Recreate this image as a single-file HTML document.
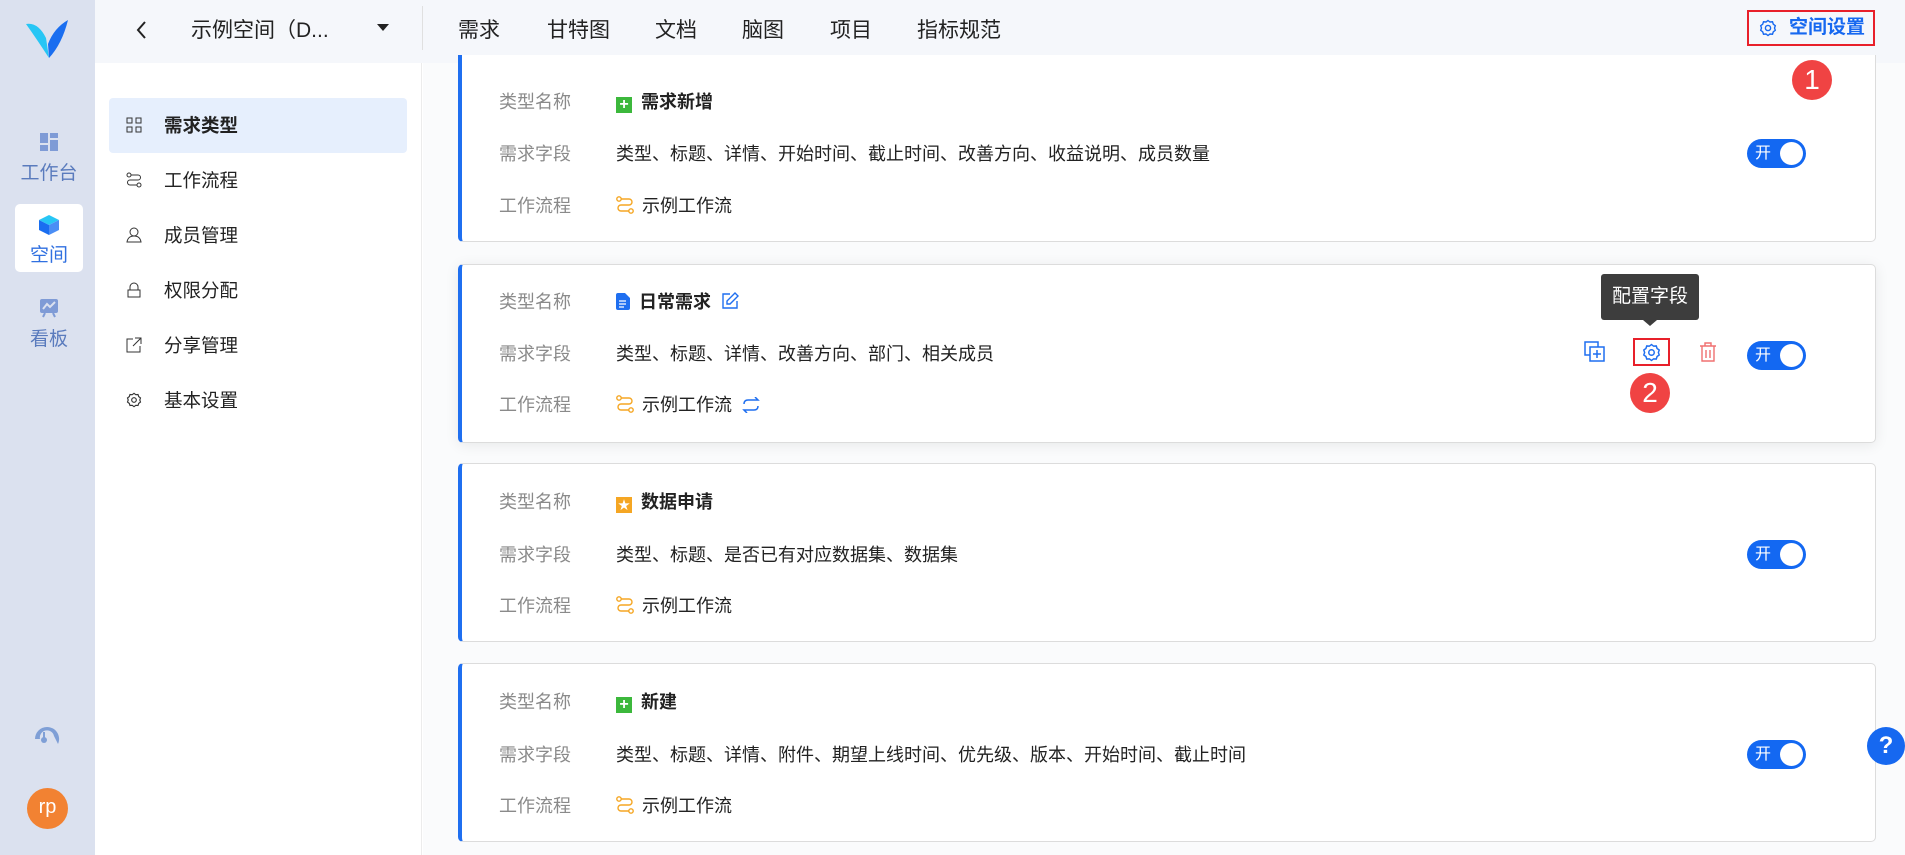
<!DOCTYPE html>
<html><head><meta charset="utf-8"><style>
*{box-sizing:border-box;margin:0;padding:0}
body{width:1905px;height:855px;overflow:hidden;position:relative;background:#fff;font-family:"Liberation Sans","Noto Sans CJK SC",sans-serif;color:#222}
.abs{position:absolute}
#side{left:0;top:0;width:95px;height:855px;background:#dbe1ef}
.sitem{position:absolute;left:15px;width:68px;text-align:center;color:#5a7bbd;font-size:19px}
#top{left:95px;top:0;width:1810px;height:63px;background:#f5f7fb}
.nav{position:absolute;top:14px;font-size:21px;color:#222}
#lnav{left:95px;top:63px;width:327px;height:792px;background:#fff;border-right:1px solid #ececec}
.li{position:absolute;left:14px;width:298px;height:55px;font-size:18.5px;line-height:55px;padding-left:55px;color:#222;border-radius:4px}
.li svg{position:absolute;left:17px;top:19px}
#main{left:423px;top:63px;width:1482px;height:792px;background:#fafbfc}
.card{position:absolute;left:35px;width:1418px;height:179px;background:#fff;border:1px solid #dcdcdc;border-left:4px solid #1f6ff0;border-radius:5px}
.lab{position:absolute;left:37px;font-size:18px;color:#8a8a8a}
.val{position:absolute;left:154px;font-size:18px;color:#222}
.nm{font-weight:bold}
.tog{position:absolute;left:1285px;top:76px;width:59px;height:29px;background:#1368f2;border-radius:15px;color:#fff;font-size:16px;line-height:29px;padding-left:8px}
.tog:after{content:"";position:absolute;right:3px;top:3px;width:23px;height:23px;border-radius:50%;background:#fff}
.badge{position:absolute;width:40px;height:40px;border-radius:50%;background:#f04343;color:#fff;font-size:28px;text-align:center;line-height:40px;z-index:5}
</style></head><body>
<div id="side" class="abs">
 <svg class="abs" style="left:24px;top:18px" width="46" height="44" viewBox="0 0 46 44"><path d="M2 6 Q14 4 22 20 L25 40 Q12 20 2 6Z" fill="#27c6f5"/><path d="M44 2 Q30 10 24 26 L25 40 Q38 26 44 2Z" fill="#1a6ef0"/></svg>
 <div class="sitem" style="top:132px"><svg width="20" height="20"><rect x="1" y="1" width="8" height="10" fill="#7f9bd6"/><rect x="11" y="1" width="8" height="5" fill="#7f9bd6"/><rect x="1" y="13" width="8" height="6" fill="#7f9bd6"/><rect x="11" y="8" width="8" height="11" fill="#7f9bd6"/></svg><div>工作台</div></div>
 <div class="sitem" style="top:204px;height:68px;background:#fff;border-radius:5px;padding-top:10px"><svg width="22" height="22" viewBox="0 0 22 22"><path d="M11 1 L21 6 L11 11 L1 6Z" fill="#27c6f5"/><path d="M1 6 L11 11 L11 21 L1 16Z" fill="#1a6ef0"/><path d="M21 6 L11 11 L11 21 L21 16Z" fill="#4a8ef5"/></svg><div style="color:#3070e0;margin-top:-2px">空间</div></div>
 <div class="sitem" style="top:296px"><svg width="22" height="22"><rect x="2" y="3" width="18" height="14" rx="2" fill="#7f9bd6"/><path d="M5 13 L9 8 L12 11 L17 6" stroke="#dbe1ef" stroke-width="2" fill="none"/><path d="M7 17 L5 21 M15 17 L17 21" stroke="#7f9bd6" stroke-width="2"/></svg><div>看板</div></div>
 <svg class="abs" style="left:34px;top:726px" width="26" height="24" viewBox="0 0 26 24"><path d="M13 1 A12 12 0 0 0 1 13 L6 13 A7 7 0 0 1 20 10 L24 18 A12 12 0 0 0 13 1Z" fill="#7f9fd6"/><circle cx="10" cy="14" r="3" fill="#7f9fd6"/><path d="M10 14 L10 6" stroke="#7f9fd6" stroke-width="2"/></svg>
 <div class="abs" style="left:27px;top:788px;width:41px;height:41px;border-radius:50%;background:#f28232;color:#fff;font-size:20px;text-align:center;line-height:39px">rp</div>
</div>
<div id="top" class="abs">
 <svg class="abs" style="left:40px;top:20px" width="12" height="20"><path d="M10 2 L3 10 L10 18" fill="none" stroke="#222" stroke-width="2"/></svg>
 <div class="nav" style="left:96px">示例空间（D...</div>
 <div class="abs" style="left:282px;top:24px;border:6px solid transparent;border-top:7px solid #222"></div>
 <div class="abs" style="left:327px;top:6px;width:1px;height:44px;background:#e0e0e0"></div>
 <div class="nav" style="left:363px">需求</div>
 <div class="nav" style="left:452px">甘特图</div>
 <div class="nav" style="left:560px">文档</div>
 <div class="nav" style="left:647px">脑图</div>
 <div class="nav" style="left:735px">项目</div>
 <div class="nav" style="left:822px">指标规范</div>
 <div class="abs" style="left:1652px;top:10px;width:128px;height:36px;border:2px solid #e8202a;color:#1668f0;font-size:19px;font-weight:bold;line-height:32px;padding-left:40px">空间设置
  <svg class="abs" style="left:10px;top:7px" width="18" height="18" viewBox="0 0 18 18"><path d="M9 1.5 L11 3 L13.5 2.8 L14.3 5.2 L16.3 6.7 L15.5 9 L16.3 11.3 L14.3 12.8 L13.5 15.2 L11 15 L9 16.5 L7 15 L4.5 15.2 L3.7 12.8 L1.7 11.3 L2.5 9 L1.7 6.7 L3.7 5.2 L4.5 2.8 L7 3Z" fill="none" stroke="#1668f0" stroke-width="1.4"/><circle cx="9" cy="9" r="2.6" fill="none" stroke="#1668f0" stroke-width="1.4"/></svg></div>
</div>
<div id="lnav" class="abs">
 <div class="li" style="top:35px;background:#e6effd;font-weight:bold"><svg width="16" height="16"><rect x="1" y="1" width="5" height="5" fill="none" stroke="#333"/><rect x="10" y="1" width="5" height="5" fill="none" stroke="#333"/><rect x="1" y="10" width="5" height="5" fill="none" stroke="#333"/><rect x="10" y="10" width="5" height="5" fill="none" stroke="#333"/></svg>需求类型</div>
 <div class="li" style="top:90px"><svg width="16" height="16"><circle cx="3" cy="3" r="2" fill="none" stroke="#333"/><circle cx="13" cy="13" r="2" fill="none" stroke="#333"/><path d="M5 3H12A2.5 2.5 0 0 1 12 8H4A2.5 2.5 0 0 0 4 13H11" fill="none" stroke="#333"/></svg>工作流程</div>
 <div class="li" style="top:145px"><svg width="16" height="16"><circle cx="8" cy="5" r="4" fill="none" stroke="#333"/><path d="M1 15 Q2 9 8 9 Q14 9 15 15Z" fill="none" stroke="#333"/></svg>成员管理</div>
 <div class="li" style="top:200px"><svg width="16" height="16"><path d="M4 8V5A4 4 0 0 1 12 5V8" fill="none" stroke="#333"/><rect x="2" y="8" width="12" height="7" fill="none" stroke="#333"/></svg>权限分配</div>
 <div class="li" style="top:255px"><svg width="16" height="16"><path d="M7 2H1V15H14V9M9 1H15V7M15 1L7 9" fill="none" stroke="#333"/></svg>分享管理</div>
 <div class="li" style="top:310px"><svg width="16" height="16" viewBox="0 0 18 18"><path d="M9 1.5 L11 3 L13.5 2.8 L14.3 5.2 L16.3 6.7 L15.5 9 L16.3 11.3 L14.3 12.8 L13.5 15.2 L11 15 L9 16.5 L7 15 L4.5 15.2 L3.7 12.8 L1.7 11.3 L2.5 9 L1.7 6.7 L3.7 5.2 L4.5 2.8 L7 3Z" fill="none" stroke="#333" stroke-width="1.3"/><circle cx="9" cy="9" r="2.6" fill="none" stroke="#333" stroke-width="1.3"/></svg>基本设置</div>
</div>
<div id="main" class="abs">
 <div class="card" style="top:-8px;height:187px;border-top:none;border-radius:0 0 5px 5px">
  <div class="lab" style="top:33px">类型名称</div><div class="val nm" style="top:33px"><span style="display:inline-block;width:16px;height:16px;background:#3cb83c;color:#fff;font-size:16px;line-height:15px;text-align:center;vertical-align:-1px;margin-right:9px">+</span>需求新增</div>
  <div class="lab" style="top:85px">需求字段</div><div class="val" style="top:85px">类型、标题、详情、开始时间、截止时间、改善方向、收益说明、成员数量</div>
  <div class="lab" style="top:137px">工作流程</div><div class="val" style="top:137px"><svg width="18" height="18" style="vertical-align:-2px;margin-right:8px"><circle cx="3" cy="3" r="2.2" fill="none" stroke="#f5a623" stroke-width="1.4"/><circle cx="15" cy="15" r="2.2" fill="none" stroke="#f5a623" stroke-width="1.4"/><path d="M5 3H13A3 3 0 0 1 13 9H5A3 3 0 0 0 5 15H13" fill="none" stroke="#f5a623" stroke-width="1.4"/></svg>示例工作流</div>
  <div class="tog" style="top:84px">开</div>
 </div>
 <div class="card" style="top:201px;box-shadow:0 2px 14px rgba(0,0,0,.08)">
  <div class="lab" style="top:23px">类型名称</div><div class="val nm" style="top:23px"><svg width="14" height="17" style="vertical-align:-2px;margin-right:9px"><path d="M0 2Q0 0 2 0H9L14 5V15Q14 17 12 17H2Q0 17 0 15Z" fill="#1f6ff0"/><path d="M3 8H10M3 11H10M3 14H8" stroke="#fff" stroke-width="1.3"/></svg>日常需求<svg width="18" height="18" style="vertical-align:-2px;margin-left:10px"><path d="M9 2H2V16H16V9" fill="none" stroke="#1f6ff0" stroke-width="1.4"/><path d="M14 1L17 4L9 12H6V9Z" fill="none" stroke="#1f6ff0" stroke-width="1.4"/></svg></div>
  <div class="lab" style="top:75px">需求字段</div><div class="val" style="top:75px">类型、标题、详情、改善方向、部门、相关成员</div>
  <div class="lab" style="top:126px">工作流程</div><div class="val" style="top:126px"><svg width="18" height="18" style="vertical-align:-2px;margin-right:8px"><circle cx="3" cy="3" r="2.2" fill="none" stroke="#f5a623" stroke-width="1.4"/><circle cx="15" cy="15" r="2.2" fill="none" stroke="#f5a623" stroke-width="1.4"/><path d="M5 3H13A3 3 0 0 1 13 9H5A3 3 0 0 0 5 15H13" fill="none" stroke="#f5a623" stroke-width="1.4"/></svg>示例工作流<svg width="18" height="16" style="vertical-align:-2px;margin-left:10px"><path d="M2 7Q2 3 6 3H16L13 0M16 9Q16 13 12 13H2L5 16" fill="none" stroke="#1f6ff0" stroke-width="1.5"/></svg></div>
  <svg class="abs" style="left:1122px;top:76px" width="22" height="22"><rect x="1" y="1" width="13" height="13" fill="none" stroke="#1f6ff0" stroke-width="1.5"/><rect x="6" y="6" width="14" height="14" fill="#fff" stroke="#1f6ff0" stroke-width="1.5"/><path d="M13 9V17M9 13H17" stroke="#1f6ff0" stroke-width="1.5"/></svg>
  <div class="abs" style="left:1171px;top:73px;width:37px;height:28px;border:2px solid #e8202a"></div>
  <svg class="abs" style="left:1180px;top:78px" width="19" height="19" viewBox="0 0 18 18"><path d="M9 1.5 L11 3 L13.5 2.8 L14.3 5.2 L16.3 6.7 L15.5 9 L16.3 11.3 L14.3 12.8 L13.5 15.2 L11 15 L9 16.5 L7 15 L4.5 15.2 L3.7 12.8 L1.7 11.3 L2.5 9 L1.7 6.7 L3.7 5.2 L4.5 2.8 L7 3Z" fill="none" stroke="#1f6ff0" stroke-width="1.4"/><circle cx="9" cy="9" r="2.6" fill="none" stroke="#1f6ff0" stroke-width="1.4"/></svg>
  <svg class="abs" style="left:1237px;top:77px" width="18" height="20"><path d="M1 4H17M6 4V1H12V4M3 4V19H15V4M7 8V16M11 8V16" fill="none" stroke="#f07070" stroke-width="1.4"/></svg>
  <div class="tog">开</div>
  <div class="abs" style="left:1139px;top:9px;width:98px;height:46px;background:#3d3d3d;border-radius:3px;color:#fff;font-size:19px;line-height:46px;text-align:center">配置字段</div>
  <div class="abs" style="left:1181px;top:55px;border:7px solid transparent;border-top:6px solid #3d3d3d"></div>
 </div>
 <div class="badge" style="left:1207px;top:310px">2</div>
 <div class="card" style="top:400px">
  <div class="lab" style="top:24px">类型名称</div><div class="val nm" style="top:24px"><span style="display:inline-block;width:16px;height:16px;background:#f5a623;color:#fff;font-size:12px;line-height:16px;text-align:center;vertical-align:-1px;margin-right:9px">★</span>数据申请</div>
  <div class="lab" style="top:77px">需求字段</div><div class="val" style="top:77px">类型、标题、是否已有对应数据集、数据集</div>
  <div class="lab" style="top:128px">工作流程</div><div class="val" style="top:128px"><svg width="18" height="18" style="vertical-align:-2px;margin-right:8px"><circle cx="3" cy="3" r="2.2" fill="none" stroke="#f5a623" stroke-width="1.4"/><circle cx="15" cy="15" r="2.2" fill="none" stroke="#f5a623" stroke-width="1.4"/><path d="M5 3H13A3 3 0 0 1 13 9H5A3 3 0 0 0 5 15H13" fill="none" stroke="#f5a623" stroke-width="1.4"/></svg>示例工作流</div>
  <div class="tog">开</div>
 </div>
 <div class="card" style="top:600px">
  <div class="lab" style="top:24px">类型名称</div><div class="val nm" style="top:24px"><span style="display:inline-block;width:16px;height:16px;background:#3cb83c;color:#fff;font-size:16px;line-height:15px;text-align:center;vertical-align:-1px;margin-right:9px">+</span>新建</div>
  <div class="lab" style="top:77px">需求字段</div><div class="val" style="top:77px">类型、标题、详情、附件、期望上线时间、优先级、版本、开始时间、截止时间</div>
  <div class="lab" style="top:128px">工作流程</div><div class="val" style="top:128px"><svg width="18" height="18" style="vertical-align:-2px;margin-right:8px"><circle cx="3" cy="3" r="2.2" fill="none" stroke="#f5a623" stroke-width="1.4"/><circle cx="15" cy="15" r="2.2" fill="none" stroke="#f5a623" stroke-width="1.4"/><path d="M5 3H13A3 3 0 0 1 13 9H5A3 3 0 0 0 5 15H13" fill="none" stroke="#f5a623" stroke-width="1.4"/></svg>示例工作流</div>
  <div class="tog">开</div>
 </div>
</div>
<div class="badge" style="left:1792px;top:60px">1</div>
<div class="abs" style="left:1867px;top:727px;width:38px;height:38px;border-radius:50%;background:#1668f0;color:#fff;font-size:24px;font-weight:bold;text-align:center;line-height:38px">?</div>
</body></html>
